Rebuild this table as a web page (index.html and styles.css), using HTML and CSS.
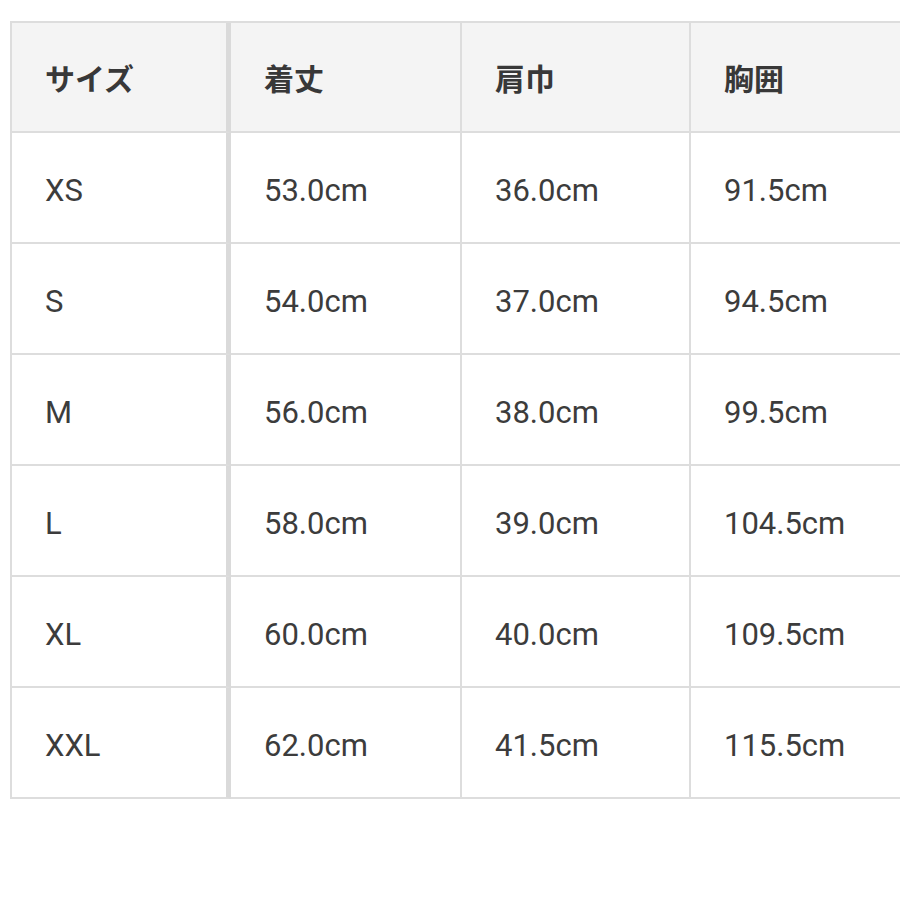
FILE: index.html
```html
<!DOCTYPE html>
<html lang="ja">
<head>
<meta charset="utf-8">
<link rel="stylesheet" href="styles.css">
</head>
<body>
<div class="page">
  <div class="size-table">
    <div class="cell head first">サイズ</div>
    <div class="cell head">着丈</div>
    <div class="cell head">肩巾</div>
    <div class="cell head">胸囲</div>

    <div class="cell first">XS</div>
    <div class="cell">53.0cm</div>
    <div class="cell">36.0cm</div>
    <div class="cell">91.5cm</div>

    <div class="cell first">S</div>
    <div class="cell">54.0cm</div>
    <div class="cell">37.0cm</div>
    <div class="cell">94.5cm</div>

    <div class="cell first">M</div>
    <div class="cell">56.0cm</div>
    <div class="cell">38.0cm</div>
    <div class="cell">99.5cm</div>

    <div class="cell first">L</div>
    <div class="cell">58.0cm</div>
    <div class="cell">39.0cm</div>
    <div class="cell">104.5cm</div>

    <div class="cell first">XL</div>
    <div class="cell">60.0cm</div>
    <div class="cell">40.0cm</div>
    <div class="cell">109.5cm</div>

    <div class="cell first">XXL</div>
    <div class="cell">62.0cm</div>
    <div class="cell">41.5cm</div>
    <div class="cell">115.5cm</div>
  </div>
</div>
</body>
</html>
```

FILE: styles.css
```css
html, body {
  margin: 0;
  padding: 0;
  background: #ffffff;
}
body {
  width: 900px;
  height: 900px;
  overflow: hidden;
  font-family: Roboto, "Noto Sans CJK JP", sans-serif;
  color: #3c3c3c;
}
.page {
  padding: 21px 0 0 10px;
}
.size-table {
  display: grid;
  grid-template-columns: 219px 231px 229px 230px;
  grid-template-rows: 110px;
  grid-auto-rows: 111px;
  width: max-content;
  border-left: 2px solid #dddddd;
  border-top: 2px solid #dddddd;
}
.cell {
  display: flex;
  align-items: center;
  padding-left: 33px;
  padding-top: 5px;
  font-size: 31px;
  line-height: 1;
  border-right: 2px solid #dddddd;
  border-bottom: 2px solid #dddddd;
  background: #ffffff;
}
.cell.head {
  background: #f4f4f4;
  font-family: "Noto Sans CJK JP", Roboto, sans-serif;
  font-weight: 700;
  font-size: 30px;
  color: #383838;
  padding-top: 0;
}
.cell.first {
  border-right: 5px solid #dadada;
}
```
